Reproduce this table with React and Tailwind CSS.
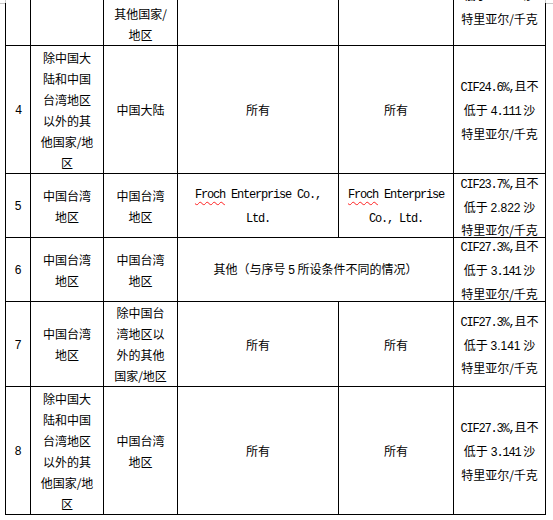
import React from "react";

const M = ({ children }) => (
  <span className="font-['Liberation_Mono','Noto_Sans_CJK_SC',monospace] text-[12px] tracking-[-1.2px]">
    {children}
  </span>
);

const S = ({ children }) => (
  <span className="font-['Liberation_Sans','Noto_Sans_CJK_SC',sans-serif] text-[12px]">
    {children}
  </span>
);

const Wavy = ({ children }) => (
  <span className="underline decoration-wavy decoration-[#ff2020] decoration-1 underline-offset-[3px]">
    {children}
  </span>
);

const Cell = ({ children, className = "" }) => (
  <div
    className={`bg-white flex justify-center text-center whitespace-nowrap ${className.includes("items-end") ? "" : "items-center"} ${className}`}
  >
    <div>{children}</div>
  </div>
);

const Lines = ({ lines }) =>
  lines.map((l, i) => (
    <React.Fragment key={i}>
      {l}
      {i < lines.length - 1 && <br />}
    </React.Fragment>
  ));

const otherRegion = [
  "除中国大",
  "陆和中国",
  "台湾地区",
  "以外的其",
  "他国家/地",
  "区",
];

const price = (pct, num, sans) => (
  <Lines
    lines={[
      <>
        <M>CIF{pct}%,</M>且不
      </>,
      <>
        低于 {sans ? <S>{num}</S> : <M>{num}</M>} 沙
      </>,
      "特里亚尔/千克",
    ]}
  />
);

export default function App() {
  return (
    <div className="relative w-[553px] h-[520px] overflow-hidden bg-white text-black font-['Noto_Sans_CJK_SC',sans-serif] text-[12px] leading-[21px]">
      <div className="ml-[5px] mt-[-57px] w-[541px] grid grid-cols-[24px_72px_73px_160px_114px_91px] grid-rows-[101px_127px_63px_63px_84px_127px] gap-px p-px bg-black">
        {/* partial row */}
        <Cell />
        <Cell />
        <Cell className="items-end">
          <Lines lines={["除中国大陆", "和中国台湾", "地区以外的", "其他国家/", "地区"]} />
        </Cell>
        <Cell />
        <Cell />
        <Cell>{price("24.6", "4.111")}</Cell>

        {/* row 4 */}
        <Cell>
          <M>4</M>
        </Cell>
        <Cell>
          <Lines lines={otherRegion} />
        </Cell>
        <Cell>中国大陆</Cell>
        <Cell>所有</Cell>
        <Cell>所有</Cell>
        <Cell>{price("24.6", "4.111")}</Cell>

        {/* row 5 */}
        <Cell>
          <S>5</S>
        </Cell>
        <Cell>
          <Lines lines={["中国台湾", "地区"]} />
        </Cell>
        <Cell>
          <Lines lines={["中国台湾", "地区"]} />
        </Cell>
        <Cell>
          <M>
            <Wavy>Froch</Wavy> Enterprise Co.,
            <br />
            Ltd.
          </M>
        </Cell>
        <Cell>
          <M>
            <Wavy>Froch</Wavy> Enterprise
            <br />
            Co., Ltd.
          </M>
        </Cell>
        <Cell>{price("23.7", "2.822", true)}</Cell>

        {/* row 6 */}
        <Cell>
          <S>6</S>
        </Cell>
        <Cell>
          <Lines lines={["中国台湾", "地区"]} />
        </Cell>
        <Cell>
          <Lines lines={["中国台湾", "地区"]} />
        </Cell>
        <Cell className="col-span-2">
          其他（与序号 <S>5</S> 所设条件不同的情况）
        </Cell>
        <Cell>{price("27.3", "3.141")}</Cell>

        {/* row 7 */}
        <Cell>
          <S>7</S>
        </Cell>
        <Cell>
          <Lines lines={["中国台湾", "地区"]} />
        </Cell>
        <Cell>
          <Lines lines={["除中国台", "湾地区以", "外的其他", "国家/地区"]} />
        </Cell>
        <Cell>所有</Cell>
        <Cell>所有</Cell>
        <Cell>{price("27.3", "3.141", true)}</Cell>

        {/* row 8 */}
        <Cell>
          <S>8</S>
        </Cell>
        <Cell>
          <Lines lines={otherRegion} />
        </Cell>
        <Cell>
          <Lines lines={["中国台湾", "地区"]} />
        </Cell>
        <Cell>所有</Cell>
        <Cell>所有</Cell>
        <Cell>{price("27.3", "3.141")}</Cell>
      </div>

      {/* page corner marks */}
      <div className="absolute left-0 top-[3px] w-[5px] h-px bg-[#c8c8c8]" />
      <div className="absolute left-[5px] top-0 w-px h-[3px] bg-[#c8c8c8]" />
      <div className="absolute left-[546px] top-[3px] w-[7px] h-px bg-[#c8c8c8]" />
      <div className="absolute left-[545px] top-0 w-px h-[3px] bg-[#c8c8c8]" />
    </div>
  );
}
